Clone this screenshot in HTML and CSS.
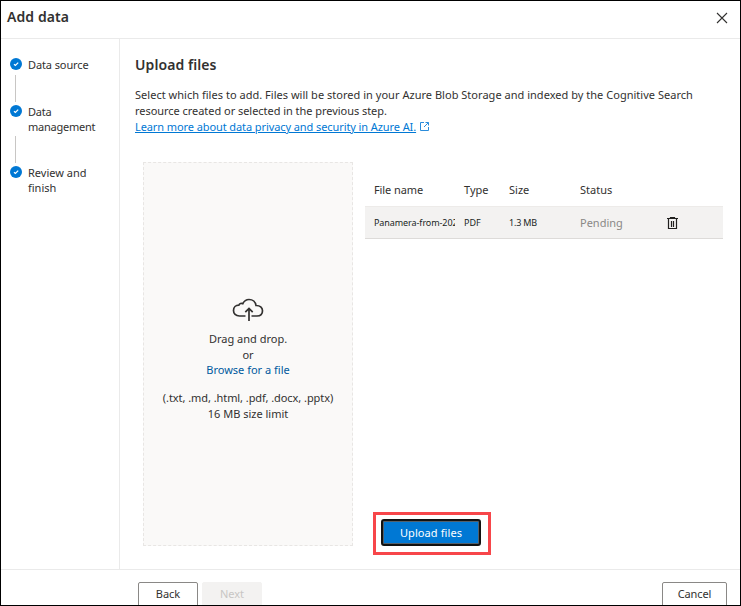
FILE: index.html
```html
<!DOCTYPE html>
<html lang="en">
<head>
<meta charset="utf-8">
<title>Add data</title>
<link rel="stylesheet" href="styles.css">
</head>
<body>
<div class="dialog">
  <header class="header">
    <h1>Add data</h1>
    <svg class="close" width="12" height="12" viewBox="0 0 12 12"><path d="M1 1l10 10M11 1L1 11" stroke="#323130" stroke-width="1.1" fill="none"/></svg>
  </header>
  <div class="middle">
    <nav class="steps">
      <div class="step first">
        <div class="mark"><svg width="12" height="12" viewBox="0 0 12 12"><circle cx="6" cy="6" r="6" fill="#0078d4"/><path d="M4 6.2l1.4 1.3L8.2 4.6" stroke="#fff" stroke-width="1.2" fill="none"/></svg><i class="line"></i></div>
        <div class="label s1">Data source</div>
      </div>
      <div class="step second">
        <div class="mark"><svg width="12" height="12" viewBox="0 0 12 12"><circle cx="6" cy="6" r="6" fill="#0078d4"/><path d="M4 6.2l1.4 1.3L8.2 4.6" stroke="#fff" stroke-width="1.2" fill="none"/></svg><i class="line"></i></div>
        <div class="label s2">Data<br>management</div>
      </div>
      <div class="step">
        <div class="mark"><svg width="12" height="12" viewBox="0 0 12 12"><circle cx="6" cy="6" r="6" fill="#0078d4"/><path d="M4 6.2l1.4 1.3L8.2 4.6" stroke="#fff" stroke-width="1.2" fill="none"/></svg></div>
        <div class="label s3">Review and<br>finish</div>
      </div>
    </nav>
    <main class="content">
      <h2>Upload files</h2>
      <p class="intro"><span class="l1">Select which files to add. Files will be stored in your Azure Blob Storage and indexed by the Cognitive Search</span><br><span class="l2">resource created or selected in the previous step.</span><br><a class="learn">Learn more about data privacy and security in Azure AI.</a><svg class="ext" width="9" height="9" viewBox="0 0 9 9"><path d="M4 .5H.5v8h8V5M5.500 .5h3v3M8.500 .5L4 5" stroke="#2b8cdb" fill="none"/></svg></p>
      <div class="columns">
        <section class="drop">
          <svg class="cloud" width="32" height="24" viewBox="0 0 32 24"><path d="M13.500 18H7.500C3.700 18 1.500 15.700 1.500 12.500C1.500 9.300 3.800 7.200 6.800 7.200C7.600 5.200 9.400 5.100 10.800 5.700C12.200 2.700 14.300 1.500 17 1.500C20.700 1.500 23.500 4 24 7.500C28 7.400 30.500 9.500 30.500 12.700C30.500 15.900 28.300 18 25 18H19.500M17 23V11M13.300 14.200L17 10.500L20.700 14.200" stroke="#323130" stroke-width="1.700" fill="none"/></svg>
          <div class="d1">Drag and drop.</div>
          <div class="or">or</div>
          <a class="browse">Browse for a file</a>
          <div class="types">(.txt, .md, .html, .pdf, .docx, .pptx)</div>
          <div class="limit">16 MB size limit</div>
        </section>
        <section class="files">
          <div class="row head"><span>File name</span><span>Type</span><span>Size</span><span class="st">Status</span></div>
          <div class="row item"><span class="name">Panamera-from-2021</span><span class="pdf">PDF</span><span class="size">1.3 MB</span><span class="pending">Pending</span><svg class="trash" width="11" height="13" viewBox="0 0 11 13"><path d="M0 1.500H11M3.500 1.500V.5h4v1M1.500 2v9.500h8V2M4.500 4v6M6.500 4v6" stroke="#201f1e" stroke-width="1.200" fill="none"/></svg></div>
          <div class="callout"><button class="upload">Upload files</button></div>
        </section>
      </div>
    </main>
  </div>
  <footer class="footer">
    <button class="btn back">Back</button>
    <button class="btn next" disabled>Next</button>
    <button class="btn cancel">Cancel</button>
  </footer>
</div>
</body>
</html>
```
FILE: styles.css
```css
* { box-sizing: border-box; }
body { margin: 0; background: #fff; }
body, button { font-family: "Noto Sans", "Open Sans", sans-serif; font-size: 11px; line-height: 16px; color: #323130; }
svg { display: block; flex: none; }
h1, h2, p { margin: 0; }
.dialog { width: 741px; height: 606px; border: 1px solid #000; display: flex; flex-direction: column; overflow: hidden; }
.header { height: 38px; flex: none; border-bottom: 1px solid #eaeaea; display: flex; justify-content: space-between; padding: 6px 12px 0 6px; }
h1 { font-size: 14px; line-height: 20px; font-weight: 600; letter-spacing: 0.08px; }
.close { margin-top: 5px; }
.middle { display: flex; height: 530px; flex: none; }
.steps { width: 119px; flex: none; border-right: 1px solid #eaeaea; padding: 19px 0 0 9px; }
.step { display: flex; gap: 6px; }
.first { height: 47px; }
.second { height: 61px; }
.mark { width: 12px; }
.line { display: block; width: 1px; height: 27px; margin: 5px 0 0 5px; background: #c8c6c4; }
.second .line { margin-top: 19px; }
.label { line-height: 15px; white-space: nowrap; margin-top: -1px; letter-spacing: -0.1px; }
.s2 { letter-spacing: -0.25px; }
.s3 { letter-spacing: 0; }
.content { flex: 1; padding: 16px 0 0 15px; }
h2 { font-size: 14px; line-height: 20px; font-weight: 600; letter-spacing: 0.08px; }
.intro { margin-top: 12px; white-space: nowrap; }
.l1 { letter-spacing: 0.025px; }
.l2 { letter-spacing: -0.04px; }
.learn { color: #0078d4; text-decoration: underline; text-underline-offset: 1px; letter-spacing: -0.09px; }
.ext { display: inline-block; margin-left: 4px; }
.columns { display: flex; margin: 27px 0 0 8px; }
.drop { width: 210px; height: 384px; border: 1px dashed #e8e6e4; background: #faf9f8; display: flex; flex-direction: column; align-items: center; padding-top: 135px; white-space: nowrap; }
.cloud { margin-bottom: 9px; }
.browse { color: #005a9e; line-height: 15px; margin-top: -1px; }
.types { margin-top: 13px; letter-spacing: -0.07px; }
.files { width: 358px; margin-left: 12px; padding-top: 11px; }
.row { display: grid; grid-template-columns: 90px 45px 71px 88px 1fr; align-items: center; padding-left: 9px; height: 33px; white-space: nowrap; }
.item { background: #f3f2f1; border-top: 1px solid #edebe9; border-bottom: 1px solid #dddbd9; font-size: 9px; color: #201f1e; }
.head span:first-child { letter-spacing: -0.1px; }
.name { width: 81px; overflow: hidden; letter-spacing: -0.08px; }
.size { letter-spacing: -0.2px; }
.trash { margin: 2px 0 0 -1px; }
.pending { font-size: 11px; color: #8a8886; }
.callout { width: 118px; height: 43px; margin: 273px 0 0 8px; border: 3px solid #f7464a; padding: 4px 5px; }
.upload { display: block; width: 100px; height: 27px; border: 2px solid #111; border-radius: 3px; padding: 0; background: #0078d4; color: #fff; letter-spacing: 0.1px; box-shadow: inset 0 0 0 1px #53606b; }
.footer { flex: 1; border-top: 1px solid #eaeaea; display: flex; align-items: flex-start; padding: 12px 13px 0 137px; }
.btn { flex: none; width: 60px; height: 25px; border: 1px solid #8a8886; border-radius: 2px; background: #fff; padding: 0 0 2px; }
.next { margin-left: 4px; background: #f3f2f1; border-color: #f3f2f1; color: #c8c6c4; }
.cancel { margin-left: auto; width: 65px; letter-spacing: -0.1px; }
```
